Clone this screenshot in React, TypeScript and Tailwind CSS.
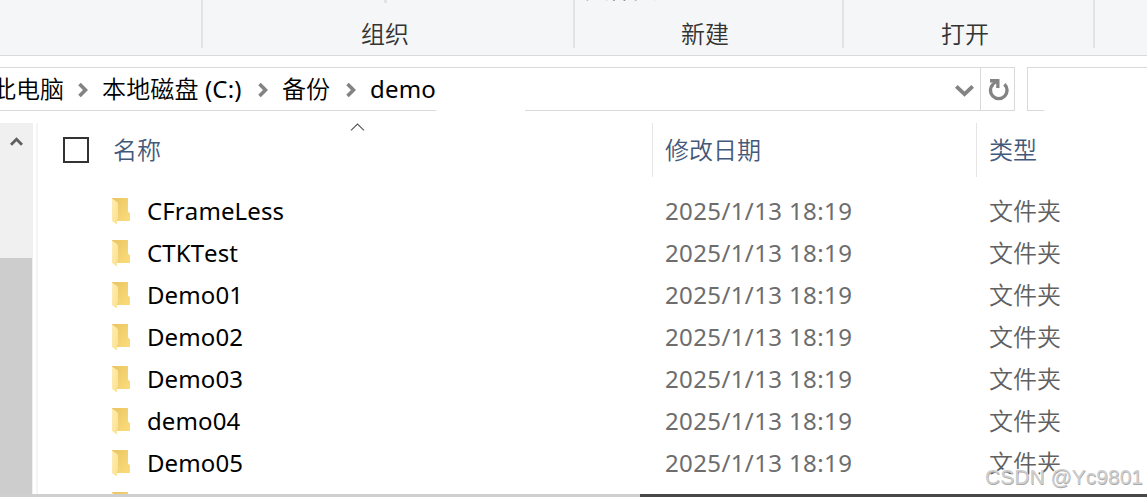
interface FileRow {
  name: string;
  modified: string;
  type: string;
}

const rows: FileRow[] = [
  { name: 'CFrameLess', modified: '2025/1/13 18:19', type: '文件夹' },
  { name: 'CTKTest', modified: '2025/1/13 18:19', type: '文件夹' },
  { name: 'Demo01', modified: '2025/1/13 18:19', type: '文件夹' },
  { name: 'Demo02', modified: '2025/1/13 18:19', type: '文件夹' },
  { name: 'Demo03', modified: '2025/1/13 18:19', type: '文件夹' },
  { name: 'demo04', modified: '2025/1/13 18:19', type: '文件夹' },
  { name: 'Demo05', modified: '2025/1/13 18:19', type: '文件夹' },
];

function FolderIcon() {
  return (
    <svg className="mt-[2px] block h-7 w-5 shrink-0" viewBox="0 0 20 28">
      <defs>
        <linearGradient id="folderBack" x1="0" y1="0" x2="1" y2="1">
          <stop offset="0" stopColor="#e9c562" />
          <stop offset="1" stopColor="#fbdc7c" />
        </linearGradient>
        <linearGradient id="folderFlap" x1="0" y1="0" x2="1" y2="1">
          <stop offset="0" stopColor="#ffedb3" />
          <stop offset="1" stopColor="#fbe092" />
        </linearGradient>
      </defs>
      <path d="M0 0h16v13.5l2 2V23H4L0 20z" fill="url(#folderBack)" />
      <path d="M0 0.5l5 3.5q1 .8 1 2V20l-1 1.5v5L0 23z" fill="url(#folderFlap)" />
    </svg>
  );
}

function Crumb() {
  return (
    <svg className="mt-[2px] block h-4 w-[10px] shrink-0" viewBox="0 0 10 16">
      <path d="M1.5 2L7.5 8L1.5 14" fill="none" stroke="#838383" strokeWidth="3.6" />
    </svg>
  );
}

export default function App() {
  return (
    <div className="relative flex h-[497px] w-[1147px] flex-col overflow-hidden bg-white font-['Noto_Sans','Noto_Sans_CJK_SC',sans-serif] text-[24px] leading-[42px] whitespace-nowrap text-black">
      {/* Ribbon */}
      <div className="flex h-[56px] shrink-0 overflow-hidden border-b border-[#d9dadb] bg-[#f5f6f7] font-[350] text-[#333]">
        <div className="h-12 w-[203px] border-r-2 border-[#e2e3e4]" />
        <div className="flex h-12 w-[372px] flex-col items-center justify-between border-r-2 border-[#e2e3e4] pr-[6px]">
          <div className="h-[3px] w-[3px] bg-[#e2e3e4]" />
          <span className="-mb-[7px]">组织</span>
        </div>
        <div className="flex h-12 w-[269px] flex-col border-r-2 border-[#e2e3e4]">
          <span className="-mt-8 pl-[10px] text-[#222]">文件夹</span>
          <span className="mt-[3px] pr-[7px] text-center">新建</span>
        </div>
        <div className="flex h-12 w-[251px] items-end justify-center border-r-2 border-[#e2e3e4] pr-[7px]">
          <span className="-mb-[7px]">打开</span>
        </div>
      </div>

      {/* Address bar */}
      <div className="mt-[11px] flex h-11 shrink-0">
        <div className="flex w-[436px] items-center border-y border-[#d9d9d9]">
          <span className="-ml-2 w-[86px] font-[350]">此电脑</span>
          <Crumb />
          <span className="ml-[14px] w-[142px] font-[350] tracking-[0.15px]">
            本地磁盘 <span className="font-normal">(C:)</span>
          </span>
          <span className="ml-[14px]"><Crumb /></span>
          <span className="ml-[14px] w-[49px] font-[350]">备份</span>
          <span className="ml-[15px]"><Crumb /></span>
          <span className="ml-[14px] tracking-[0.2px]">demo</span>
        </div>
        <div className="w-[89px] border-t border-[#d9d9d9]" />
        <div className="flex w-[455px] items-center justify-end border-y border-[#d9d9d9]">
          <svg className="mt-[3px] mr-[6px] block h-[14px] w-[19px]" viewBox="0 0 19 14">
            <path d="M1.3 2.3L9.5 10.2L17.7 2.3" fill="none" stroke="#838383" strokeWidth="3.8" />
          </svg>
        </div>
        <div className="flex w-[35px] items-center justify-center border border-[#d9d9d9]">
          <svg className="ml-[2px] block h-[23px] w-[22px]" viewBox="0 0 22 23">
            <path d="M5.1 6.2A8.3 8.3 0 1 0 16.4 6.2" fill="none" stroke="#838383" strokeWidth="3.4" />
            <path d="M2 1h9.5v9H8.2V5.4L5.5 7.5L3.6 5.4L5 4.4H2z" fill="#838383" />
          </svg>
        </div>
        <div className="ml-3 w-[17px] border-y border-l border-[#d9d9d9]" />
        <div className="flex-1 border-t border-[#d9d9d9]" />
      </div>

      {/* Content */}
      <div className="mt-3 flex h-[371px] shrink-0">
        <div className="w-[33px] shrink-0 bg-[#f0f0f0]">
          <svg className="mt-[13px] ml-[10px] block h-[11px] w-[13px]" viewBox="0 0 13 11">
            <path d="M1 8.8L6.5 3.2L12 8.8" fill="none" stroke="#5f5f5f" strokeWidth="2.8" />
          </svg>
          <div className="mt-[111px] h-[236px] w-8 bg-[#cdcdcd]" />
        </div>
        <div className="ml-[3px] w-[2px] bg-[#f5f5f5]" />
        <div className="flex flex-1 flex-col">
          {/* Column headers */}
          <div className="flex h-[54px] shrink-0 font-[350] text-[#43597a]">
            <div className="flex w-[615px] items-center border-r border-[#e5e5e5]">
              <div className="ml-[25px] h-[26px] w-[26px] border-2 border-[#333]" />
              <span className="ml-[24px]">名称</span>
              <svg className="mb-[46px] ml-[189px] block h-2 w-[15px]" viewBox="0 0 15 8">
                <path d="M1 7.3L7.5 1L14 7.3" fill="none" stroke="#555" strokeWidth="1.1" />
              </svg>
            </div>
            <div className="flex w-[324px] items-center border-r border-[#e5e5e5] pl-3">修改日期</div>
            <div className="flex items-center pl-3">类型</div>
          </div>

          {/* Rows */}
          <div className="mt-[13px] flex min-h-0 flex-1 flex-col overflow-hidden">
            {rows.map((row) => (
              <div key={row.name} className="flex h-[42px] shrink-0 items-center pl-[74px]">
                <FolderIcon />
                <span className="ml-[15px] w-[518px] tracking-[0.1px] [font-kerning:none]">{row.name}</span>
                <span className="w-[324px] tracking-[0.38px] text-[#6d6d6d]">{row.modified}</span>
                <span className="font-[350] text-[#606060]">{row.type}</span>
              </div>
            ))}
            <div className="flex h-[42px] shrink-0 items-center pl-[74px]">
              <FolderIcon />
            </div>
          </div>
        </div>
      </div>

      {/* Window bottom edge */}
      <div className="flex h-[3px] shrink-0">
        <div className="w-[640px] bg-[#cfcfcf]" />
        <div className="flex-1 bg-[#4a4747]" />
      </div>

      <div className="absolute right-1 bottom-[6px] font-['Liberation_Sans',sans-serif] text-[21px] leading-7 text-[#cecece] [text-shadow:0.5px_0.5px_0_#aaa,-1px_-1px_0_#fff]">
        CSDN @Yc9801
      </div>
    </div>
  );
}
